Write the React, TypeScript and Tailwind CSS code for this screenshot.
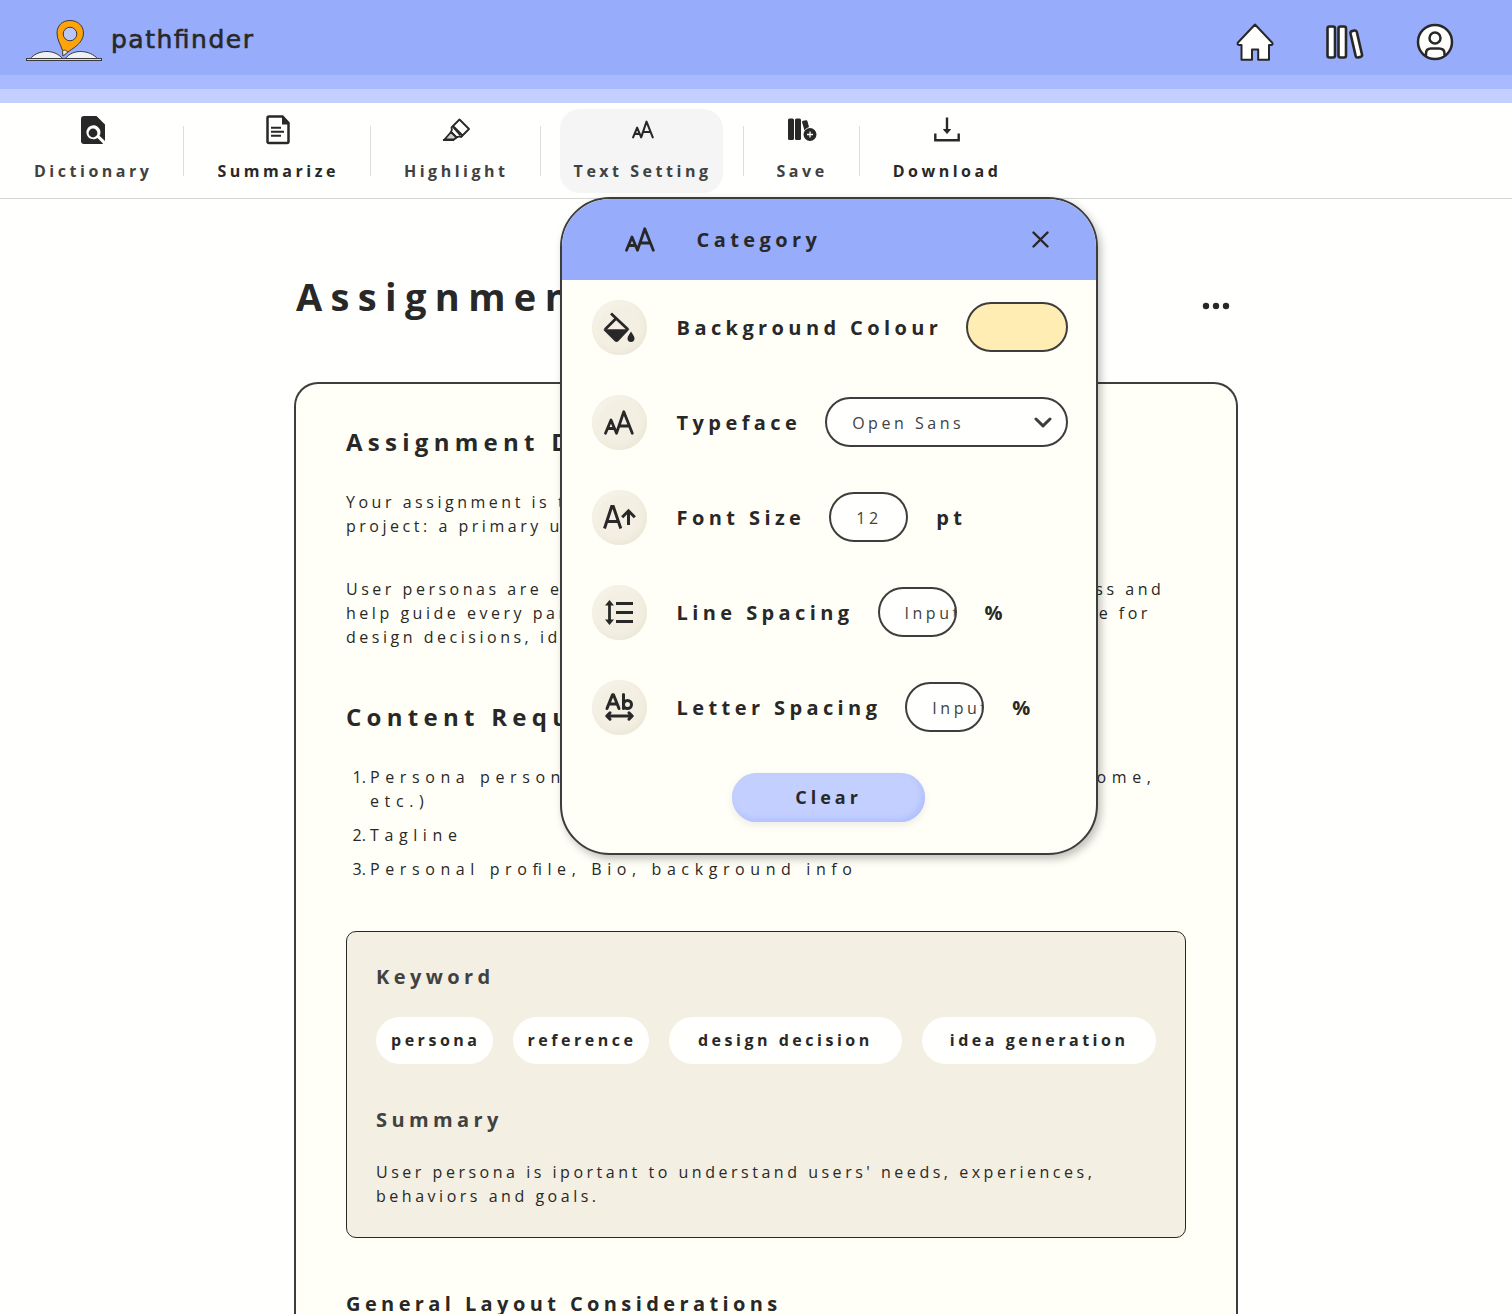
import type { ReactNode } from "react";

function Logo() {
  return (
    <svg className="mt-0.5" width="78" height="44" viewBox="0 0 78 44" fill="none" aria-hidden="true">
      <path d="M5 40C12 31 29 29 38 40Z" fill="#eef1f4" stroke="#3a3a3a" />
      <path d="M40 40C48 29 65 31 73 40Z" fill="#eef1f4" stroke="#3a3a3a" />
      <rect x="1.500" y="39.500" width="75" height="2" fill="#cfe3e6" stroke="#3a3a3a" />
      <path d="M45 1.500C37 1.500 32 7 32 14C32 21 35.500 25 37.500 31.500L38 37L43 33C46 30 58.500 25 58.500 14C58.500 7 53 1.500 45 1.500Z" fill="#ffa30a" stroke="#3a3a3a" />
      <path d="M37.500 31.500L38 37L43 33L40 31Z" fill="#f6e3c4" stroke="#3a3a3a" strokeWidth="0.8" />
      <circle cx="45" cy="15" r="6.800" fill="#b9c6f6" stroke="#3a3a3a" />
    </svg>
  );
}

function HomeIcon() {
  return (
    <svg width="38" height="38" viewBox="0 0 38 38" aria-hidden="true">
      <path d="M19 1.500L36 19.500Q37.500 21.500 35.500 22H33V36.800H22.200V26.500H16V36.800H5.500V22H3Q0.800 21.500 2 19.500Z" fill="#fffffd" stroke="#282828" strokeWidth="2" strokeLinejoin="round" />
    </svg>
  );
}

function LibraryIcon() {
  return (
    <svg width="38" height="36" viewBox="0 0 38 36" fill="#fffffd" stroke="#282828" strokeWidth="2.600" aria-hidden="true">
      <rect x="1.500" y="2.500" width="7.500" height="31" rx="2" />
      <rect x="12.500" y="2.500" width="7.500" height="31" rx="2" />
      <rect x="27" y="6.500" width="6.500" height="27" rx="2" transform="rotate(-13 30.2 20)" />
    </svg>
  );
}

function AccountIcon() {
  return (
    <svg width="38" height="38" viewBox="0 0 38 38" fill="#fffffd" stroke="#282828" strokeWidth="2.500" aria-hidden="true">
      <circle cx="19" cy="19" r="17" />
      <circle cx="19" cy="15" r="5.500" />
      <path d="M10 33V30.500Q10 25.500 15 25.500H23Q28.500 25.500 28.500 30.500V33" />
    </svg>
  );
}

function DictionaryIcon() {
  return (
    <svg width="24" height="28" viewBox="0 0 24 28" aria-hidden="true">
      <path d="M3 0H15.500L24 8.500V25L18.500 19.800A7 7 0 1 0 16.500 22L22 27.500Q21.500 28 21 28H3Q0 28 0 25V3Q0 0 3 0Z" fill="#282828" />
      <circle cx="12" cy="17" r="4.400" fill="#282828" />
    </svg>
  );
}

function SummarizeIcon() {
  return (
    <svg width="24" height="30" viewBox="0 0 24 30" fill="none" stroke="#282828" strokeWidth="2.500" aria-hidden="true">
      <path d="M3 1.500H16.500L22.500 8V26.500Q22.500 28 21 28H3Q1.500 28 1.500 26.500V3Q1.500 1.500 3 1.500Z" />
      <path d="M16 1V9.500H23Z" fill="#282828" stroke="none" />
      <path d="M5 12.800H15M5 16.800H18M5 20.800H15" strokeWidth="2" />
    </svg>
  );
}

function HighlightIcon() {
  return (
    <svg width="27" height="23" viewBox="0 0 27 23" fill="none" stroke="#282828" strokeWidth="1.800" strokeLinejoin="round" aria-hidden="true">
      <path d="M16.500 1.500L26 11L19.500 17.500L10 8Z" />
      <path d="M10 8L8.500 9.500Q9.500 12 8 14L13.500 19.500Q15.500 18 18 19L19.500 17.500M10.500 9.500L17.500 17.500" />
      <path d="M8 14L1.500 21.500H11L13.500 19.500Z" fill="#cfcfcf" />
      <path d="M0 22H11" strokeWidth="2" />
    </svg>
  );
}

function LetterSizeIcon({ width, height, stroke }: { width: number; height: number; stroke: number }) {
  return (
    <svg width={width} height={height} viewBox="0 0 30 25" fill="none" stroke="#282828" strokeWidth={stroke} strokeLinecap="round" strokeLinejoin="round" aria-hidden="true">
      <path d="M1.500 23.200L7 10L12.500 23.200L19.800 1.800L28.300 23.200M4 18.500H10.200M15.500 16H25" />
    </svg>
  );
}

function SaveIcon() {
  return (
    <svg width="29" height="23" viewBox="0 0 29 23" fill="#282828" aria-hidden="true">
      <rect x="0" y="0.500" width="6" height="21.500" rx="1.500" />
      <rect x="7" y="0.500" width="6" height="21.500" rx="1.500" />
      <path d="M14 4Q14 3 15 2.800L18 2.200Q19 2 19.400 3L21 9Q17.500 10 16.500 12.500Z" />
      <circle cx="22" cy="16.500" r="6.500" />
      <path d="M22 13.500V19.500M19 16.500H25" stroke="#fffffd" strokeWidth="1.300" />
    </svg>
  );
}

function DownloadIcon() {
  return (
    <svg width="26" height="25" viewBox="0 0 26 25" fill="none" stroke="#282828" strokeWidth="2.400" aria-hidden="true">
      <path d="M1.300 16.500V23.300H24.700V16.500M13 0.500V14" />
      <path d="M9.500 12.500H16.500L13 16.500Z" fill="#282828" stroke="#282828" strokeWidth="1" />
    </svg>
  );
}

function PaintIcon() {
  return (
    <svg width="32" height="31" viewBox="0 0 32 31" fill="none" stroke="#282828" strokeWidth="2.800" aria-hidden="true">
      <path d="M8 1.500L25 17.500M13.500 6L2 17.500" />
      <path d="M0.500 17.300H26.500L15.500 29Q13.500 31 11.500 29L1 18.500Z" fill="#282828" stroke="none" />
      <path d="M28 19.500C30 23 31.500 24.500 31.500 26.500A3.500 3.500 0 0 1 24.500 26.500C24.500 24.500 26 23 28 19.500Z" fill="#282828" stroke="none" />
    </svg>
  );
}

function FontSizeIcon() {
  return (
    <svg width="33" height="24" viewBox="0 0 33 24" fill="none" stroke="#282828" strokeWidth="3" aria-hidden="true">
      <path d="M1.500 23.500L8.700 1.500H10.300L17.800 23.500M4.500 16.500H15M25.500 20V6M19.200 12.200L25.500 5.800L31.800 12.200" />
    </svg>
  );
}

function LineSpacingIcon() {
  return (
    <svg width="28" height="25" viewBox="0 0 28 25" fill="none" stroke="#282828" strokeWidth="2.800" aria-hidden="true">
      <path d="M11 3.500H28M11 12.500H28M11 21.500H28M4.500 3V22" />
      <path d="M0 5.500L4.500 0L9 5.500ZM0 19.500L4.500 25L9 19.500Z" fill="#282828" stroke="none" />
    </svg>
  );
}

function LetterSpacingIcon() {
  return (
    <svg width="29" height="28" viewBox="0 0 29 28" fill="none" stroke="#282828" strokeWidth="3" strokeLinecap="round" strokeLinejoin="round" aria-hidden="true">
      <path d="M2 15.500L7.500 1.800H8.500L14 15.500M4 11H12M18.500 1.500V15.500" />
      <circle cx="22.500" cy="11.500" r="4" />
      <path d="M2.500 23H26.500M5 19.800L1.800 23L5 26.200M24 19.800L27.200 23L24 26.200" />
    </svg>
  );
}

function Tool({ label, icon, active = false, muted = false }: { label: string; icon: ReactNode; active?: boolean; muted?: boolean }) {
  return (
    <button
      type="button"
      aria-expanded={active ? true : undefined}
      className={`flex flex-col items-center gap-[13px] rounded-[20px] pt-[5px] pr-[11px] pb-2.5 pl-3.5 font-bold tracking-[0.22em] ${active ? "bg-[#f5f5f5]" : ""} ${muted ? "text-[#414141]" : "text-[#282828]"}`}
    >
      <span className="flex h-8 items-center">{icon}</span>
      <span className="leading-6">{label}</span>
    </button>
  );
}

function Divider() {
  return <div className="mr-[19px] ml-5 h-[50px] w-px bg-[#dddddd]" />;
}

function SettingRow({ icon, label, htmlFor, children }: { icon: ReactNode; label: string; htmlFor: string; children: ReactNode }) {
  return (
    <div className="flex h-[55px] items-center">
      <span className="mr-[30px] flex size-[55px] shrink-0 items-center justify-center rounded-full bg-[#f3efe2] shadow-[inset_-2px_-3px_6px_#ece8d8,inset_3px_3px_6px_#f6f4ea]">
        {icon}
      </span>
      <label htmlFor={htmlFor} className="mr-6 pt-0.5 text-xl font-bold tracking-[0.22em] whitespace-nowrap">
        {label}
      </label>
      {children}
    </div>
  );
}

const fieldClass =
  "h-[50px] rounded-[25px] border-2 border-[#3d3d3d] bg-[#fffffd] pt-0.5 pl-[25px] text-base tracking-[0.22em] text-[#414141] placeholder:text-[#414141] outline-none";

function TextSettings() {
  return (
    <section
      aria-label="Category"
      className="absolute top-[88px] left-0 z-10 w-[538px] overflow-hidden rounded-[50px] border-2 border-[#3d3d3d] bg-[#fffff7] text-[#282828] shadow-[3px_4px_8px_rgba(0,0,0,0.25)]"
    >
      <header className="flex h-[81px] items-center bg-[#97acfb] pr-[46px] pl-[63px]">
        <LetterSizeIcon width={30} height={25} stroke={2.8} />
        <h2 className="ml-[42px] flex-1 pt-0.5 text-xl font-bold tracking-[0.22em]">Category</h2>
        <button type="button" aria-label="Close" className="p-px">
          <svg width="17" height="17" viewBox="0 0 17 17" stroke="#282828" strokeWidth="2.400" strokeLinecap="round">
            <path d="M1.500 1.500L15.500 15.500M15.500 1.500L1.500 15.500" />
          </svg>
        </button>
      </header>
      <div className="flex flex-col gap-10 pt-5 pr-7 pl-[30px]">
        <SettingRow icon={<PaintIcon />} label="Background Colour" htmlFor="bg-colour">
          <button id="bg-colour" type="button" className="h-[50px] flex-1 rounded-[25px] border-2 border-[#3d3d3d] bg-[#ffedb3]" />
        </SettingRow>
        <SettingRow icon={<LetterSizeIcon width={30} height={25} stroke={2.8} />} label="Typeface" htmlFor="typeface">
          <div className="relative flex-1">
            <select id="typeface" className={`w-full appearance-none ${fieldClass}`}>
              <option>Open Sans</option>
              <option>Lato</option>
            </select>
            <svg className="pointer-events-none absolute top-5 right-4" width="18" height="11" viewBox="0 0 18 11" fill="none" stroke="#3d3d3d" strokeWidth="3" strokeLinecap="round" strokeLinejoin="round">
              <path d="M2 2L9 8.800L16 2" />
            </svg>
          </div>
        </SettingRow>
        <SettingRow icon={<FontSizeIcon />} label="Font Size" htmlFor="font-size">
          <input id="font-size" placeholder="12" className={`w-[79px] ${fieldClass}`} />
          <span className="ml-7 pt-0.5 text-xl font-bold tracking-[0.22em]">pt</span>
        </SettingRow>
        <SettingRow icon={<LineSpacingIcon />} label="Line Spacing" htmlFor="line-spacing">
          <input id="line-spacing" placeholder="Input" className={`w-[79px] ${fieldClass}`} />
          <span className="ml-7 pt-0.5 text-xl font-bold">%</span>
        </SettingRow>
        <SettingRow icon={<LetterSpacingIcon />} label="Letter Spacing" htmlFor="letter-spacing">
          <input id="letter-spacing" placeholder="Input" className={`w-[79px] ${fieldClass}`} />
          <span className="ml-7 pt-0.5 text-xl font-bold">%</span>
        </SettingRow>
      </div>
      <div className="flex justify-center pt-[38px] pb-[31px]">
        <button
          type="button"
          className="h-[49px] w-[193px] rounded-full bg-[#c3d0ff] text-lg font-bold tracking-[0.22em] shadow-[inset_-3px_-3px_7px_#b0bfff,0_3px_8px_rgba(0,0,0,0.08)]"
        >
          Clear
        </button>
      </div>
    </section>
  );
}

export default function App() {
  return (
    <div className="min-h-screen bg-[#fffffd] font-['Open_Sans',sans-serif] text-base text-[#282828]">
      <header>
        <div className="flex h-[75px] items-center justify-between bg-[#97acfb] pr-[58px] pl-[25px]">
          <a href="#" className="flex items-center gap-2 pt-1">
            <Logo />
            <span className="font-['DejaVu_Sans',sans-serif] text-[25px] leading-8 tracking-[0.06em] [font-feature-settings:'liga'] [-webkit-text-stroke:0.6px_#282828]">pathfinder</span>
          </a>
          <nav className="flex items-center gap-[52px] pt-2">
            <a href="#" aria-label="Home"><HomeIcon /></a>
            <a href="#" aria-label="Library"><LibraryIcon /></a>
            <a href="#" aria-label="Account"><AccountIcon /></a>
          </nav>
        </div>
        <div className="h-3.5 bg-[#a9baff]" />
        <div className="h-3.5 bg-[#c3d0ff]" />
      </header>

      <div className="flex h-24 items-center border-b border-[#d6d6d6] pl-5">
        <Tool label="Dictionary" icon={<DictionaryIcon />} muted />
        <Divider />
        <Tool label="Summarize" icon={<SummarizeIcon />} />
        <Divider />
        <Tool label="Highlight" icon={<HighlightIcon />} muted />
        <Divider />
        <div className="relative">
          <Tool label="Text Setting" icon={<LetterSizeIcon width={22} height={19} stroke={2.8} />} active muted />
          <TextSettings />
        </div>
        <Divider />
        <Tool label="Save" icon={<SaveIcon />} muted />
        <Divider />
        <Tool label="Download" icon={<DownloadIcon />} />
      </div>

      <main className="pt-[71px] pl-5">
        <div className="mx-auto max-w-[944px]">
          <div className="flex items-center justify-between pr-2 pl-0.5">
            <h1 className="text-[38px] leading-[52px] font-bold tracking-[0.22em]">Assignment 1</h1>
            <button type="button" aria-label="More options" className="pt-5">
              <svg width="28" height="8" viewBox="0 0 28 8" fill="#282828">
                <circle cx="4" cy="4" r="3.200" />
                <circle cx="14" cy="4" r="3.200" />
                <circle cx="24" cy="4" r="3.200" />
              </svg>
            </button>
          </div>

          <article className="mt-[60px] rounded-t-3xl border-2 border-b-0 border-[#3d3d3d] bg-[#fffff7] px-[50px] pt-[42px]">
            <h2 className="text-2xl leading-8 font-bold tracking-[0.22em]">Assignment Description</h2>
            <p className="mt-8 leading-6 tracking-[0.22em]">
              Your assignment is to create two user personas for your
              <br />
              project: a primary user and a secondary user.
            </p>
            <p className="mt-[39px] leading-6 tracking-[0.22em]">
              User personas are essential tools for the user-centered design process and
              <br />
              help guide every part of your designs. Personas will be your reference for
              <br />
              design decisions, idea generation and testing.
            </p>
            <h2 className="mt-[52px] text-2xl leading-8 font-bold tracking-[0.22em]">Content Requirements</h2>
            <ol className="mt-8 flex list-decimal flex-col gap-2.5 pl-6 leading-6 tracking-[0.35em] [font-feature-settings:'liga'] marker:tracking-normal">
              <li>
                Persona personal information (name, job, education, income,
                <br />
                etc.)
              </li>
              <li>Tagline</li>
              <li>Personal profile, Bio, background info</li>
            </ol>

            <section className="mt-[50px] rounded-[10px] border border-[#282828] bg-[#f3efe2] px-[29px] pt-[31px] pb-[29px]">
              <h3 className="text-xl leading-7 font-bold tracking-[0.22em] text-[#414141]">Keyword</h3>
              <ul className="mt-[26px] flex gap-5 leading-[47px] font-bold tracking-[0.22em] whitespace-nowrap">
                <li className="rounded-full bg-[#fffffd] pr-3 pl-[15px]">persona</li>
                <li className="rounded-full bg-[#fffffd] pr-3 pl-[15px]">reference</li>
                <li className="flex-1 rounded-full bg-[#fffffd] text-center">design decision</li>
                <li className="flex-1 rounded-full bg-[#fffffd] text-center">idea generation</li>
              </ul>
              <h3 className="mt-[42px] text-xl leading-7 font-bold tracking-[0.22em] text-[#414141]">Summary</h3>
              <p className="mt-[26px] leading-6 tracking-[0.22em]">
                User persona is iportant to understand users' needs, experiences, behaviors and goals.
              </p>
            </section>

            <h3 className="mt-[52px] text-xl leading-7 font-bold tracking-[0.22em]">General Layout Considerations</h3>
          </article>
        </div>
      </main>
    </div>
  );
}
